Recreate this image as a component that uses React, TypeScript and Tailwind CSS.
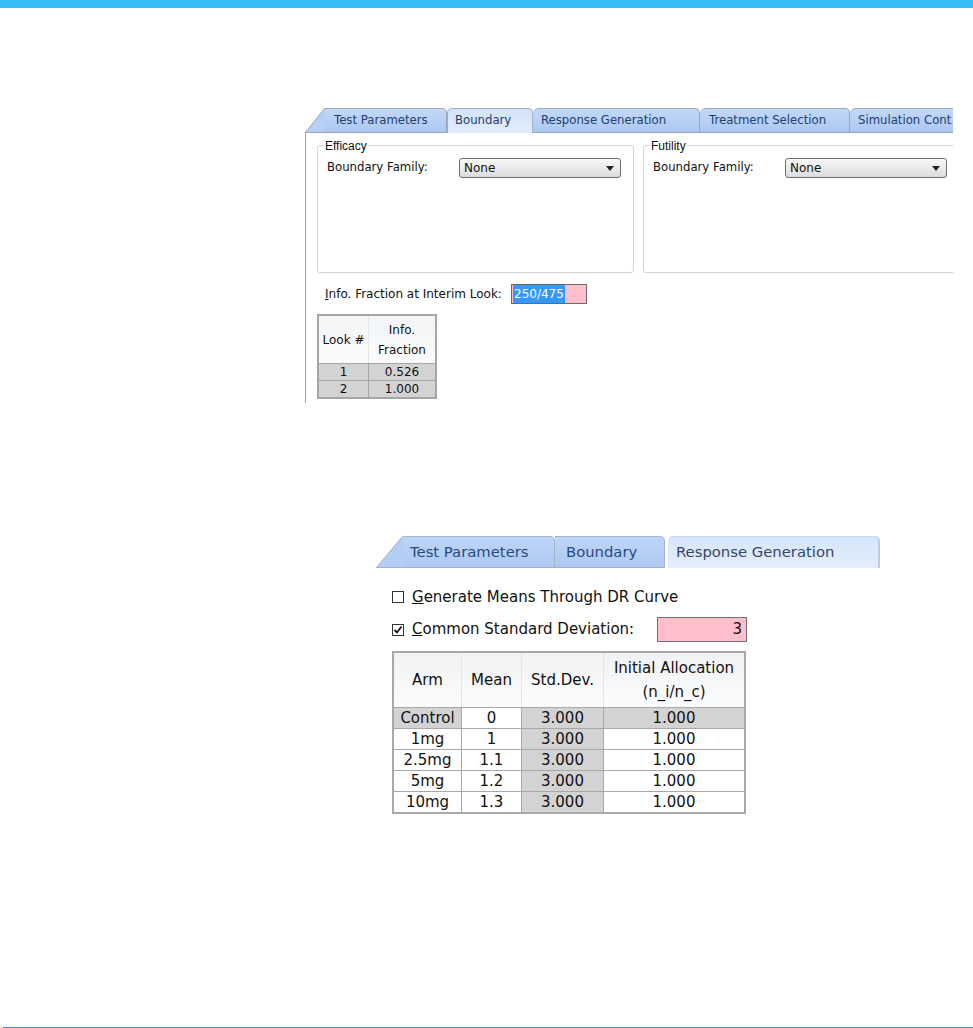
import React from "react";

const Select = () => (
  <div className="flex h-[20px] w-[162px] items-center justify-between rounded-[3px] border border-[#6e6e6e] bg-gradient-to-b from-[#f8f8f8] to-[#dcdcdc] pl-[4px] pr-[6px] text-[12px] text-[#111]">
    <span>None</span>
    <svg width="8" height="5" viewBox="0 0 8 5">
      <polygon points="0,0 8,0 4,5" fill="#222" />
    </svg>
  </div>
);

const CheckBox = ({ checked }: { checked: boolean }) => (
  <div className="flex h-[12px] w-[12px] items-center justify-center border border-[#333] bg-white">
    {checked && (
      <svg width="10" height="10" viewBox="0 0 10 10">
        <polyline points="1.5,5 4,7.5 8.5,1.5" fill="none" stroke="#111" strokeWidth="1.8" />
      </svg>
    )}
  </div>
);

export default function App() {
  const rows = [
    { arm: "Control", mean: "0", sd: "3.000", alloc: "1.000", grey: true },
    { arm: "1mg", mean: "1", sd: "3.000", alloc: "1.000", grey: false },
    { arm: "2.5mg", mean: "1.1", sd: "3.000", alloc: "1.000", grey: false },
    { arm: "5mg", mean: "1.2", sd: "3.000", alloc: "1.000", grey: false },
    { arm: "10mg", mean: "1.3", sd: "3.000", alloc: "1.000", grey: false },
  ];
  return (
    <div className="flex h-[1028px] w-[973px] flex-col overflow-hidden bg-white font-['DejaVu_Sans',sans-serif] text-[#111]">
      <div className="h-[8px] w-full shrink-0 bg-[#35bef3]" />

      {/* Screenshot 1 */}
      <div className="ml-[305px] mt-[100px] flex w-[648px] shrink-0 flex-col overflow-hidden text-[11.7px]">
        <div className="flex h-[25px] w-[700px] items-stretch">
          <div className="flex w-[142px]">
            <svg width="20" height="25" className="shrink-0">
              <polygon points="0,25 19,0.5 20,0.5 20,25" fill="#b6d0f5" />
              <line x1="0.5" y1="24.5" x2="19.5" y2="0.5" stroke="#9aa6b8" />
              <line x1="0" y1="24.5" x2="20" y2="24.5" stroke="#9aa6b8" />
            </svg>
            <div className="flex flex-1 items-center rounded-tr-[5px] border-b border-r border-t border-[#9aa6b8] bg-gradient-to-b from-[#c2d8f7] to-[#acc8f2] pl-[9px] text-[#22406f]">
              Test Parameters
            </div>
          </div>
          <div className="flex w-[86px] items-center rounded-t-[5px] border-l border-r border-t border-[#a4b0c2] bg-gradient-to-b from-[#d2e3f9] to-[#e2edfb] pl-[7px] text-[#22406f]">
            Boundary
          </div>
          <div className="flex w-[167px] items-center rounded-tl-[6px] rounded-tr-[5px] border-b border-r border-t border-[#9aa6b8] bg-gradient-to-b from-[#c2d8f7] to-[#acc8f2] pl-[8px] text-[#22406f]">
            Response Generation
          </div>
          <div className="flex w-[150px] items-center rounded-tl-[6px] rounded-tr-[5px] border-b border-r border-t border-[#9aa6b8] bg-gradient-to-b from-[#c2d8f7] to-[#acc8f2] pl-[9px] text-[#22406f]">
            Treatment Selection
          </div>
          <div className="flex w-[155px] items-center rounded-tl-[6px] rounded-tr-[5px] border-b border-r border-t border-[#9aa6b8] bg-gradient-to-b from-[#c2d8f7] to-[#acc8f2] pl-[8px] text-[#22406f] whitespace-nowrap">
            Simulation Cont
          </div>
        </div>

        <div className="flex h-[270px] flex-col border-l border-[#a0a0a0] pl-[11px] pt-[12px]">
          <div className="flex gap-[9px]">
            {["Efficacy", "Futility"].map((t) => (
              <div key={t} className="relative h-[128px] w-[317px] shrink-0 rounded-[3px] border border-[#cfd5dd]">
                <span className="absolute -top-[9px] left-[6px] bg-white px-[1px] font-['Liberation_Sans',sans-serif] text-[12px] text-[#111]">
                  {t}
                </span>
                <div className="mt-[12px] flex h-[20px] items-center pl-[9px]">
                  <span className="w-[132px]">Boundary Family:</span>
                  <Select />
                </div>
              </div>
            ))}
          </div>

          <div className="ml-[8px] mt-[11px] flex h-[20px] items-center">
            <span className="w-[186px] text-[12px]">
              <span className="underline">I</span>nfo. Fraction at Interim Look:
            </span>
            <div className="flex h-[20px] w-[76px] items-center border border-[#6a6a6a] bg-[#ffc0cb] pl-[1px] text-[12px]">
              <span className="bg-[#3399ff] px-[1px] text-white">250/475</span>
            </div>
          </div>

          <div className="mt-[10px] w-[120px] border-2 border-[#a5a5a5] text-[12px]">
            <div className="flex h-[48px] border-b border-[#a5a5a5] bg-gradient-to-b from-[#f2f4f6] to-[#fbfcfd]">
              <div className="flex w-[50px] items-center justify-center border-r border-[#e3e6ea]">Look #</div>
              <div className="flex flex-1 flex-col items-center justify-center leading-[20px]">
                <span>Info.</span>
                <span>Fraction</span>
              </div>
            </div>
            <div className="flex h-[17px] border-b border-[#a5a5a5] bg-[#d3d3d3] leading-none">
              <div className="flex w-[50px] items-center justify-center border-r border-[#a5a5a5]">1</div>
              <div className="flex flex-1 items-center justify-center">0.526</div>
            </div>
            <div className="flex h-[16px] bg-[#d3d3d3] leading-none">
              <div className="flex w-[50px] items-center justify-center border-r border-[#a5a5a5]">2</div>
              <div className="flex flex-1 items-center justify-center">1.000</div>
            </div>
          </div>
        </div>
      </div>

      {/* Screenshot 2 */}
      <div className="ml-[376px] mt-[133px] flex shrink-0 flex-col">
        <div className="flex h-[32px] items-stretch text-[14.8px]">
          <div className="flex w-[179px]">
            <svg width="27" height="32" className="shrink-0">
              <polygon points="0,32 26,0.5 27,0.5 27,32" fill="#b3cef5" />
              <line x1="0.5" y1="31.5" x2="26.5" y2="0.5" stroke="#a7b2c4" />
              <line x1="0" y1="31.5" x2="27" y2="31.5" stroke="#a7b2c4" />
            </svg>
            <div className="flex flex-1 items-center rounded-tr-[5px] border-b border-r border-t border-[#a7b2c4] bg-gradient-to-b from-[#bdd5f7] to-[#adc9f3] pl-[7px] text-[#2a4a7c]">
              Test Parameters
            </div>
          </div>
          <div className="flex w-[110px] items-center rounded-tr-[5px] border-b border-r border-t border-[#a7b2c4] bg-gradient-to-b from-[#bdd5f7] to-[#adc9f3] pl-[11px] text-[#2a4a7c]">
            Boundary
          </div>
          <div className="ml-[3px] flex w-[212px] items-center rounded-t-[5px] border-r-2 border-t border-r-[#b8cce6] border-t-[#c8d8ee] bg-gradient-to-b from-[#d6e6fb] to-[#e4eefc] pl-[8px] text-[#34466c]">
            Response Generation
          </div>
        </div>

        <div className="ml-[16px] mt-[19px] flex h-[20px] items-center gap-[8px] text-[15px]">
          <CheckBox checked={false} />
          <span>
            <span className="underline">G</span>enerate Means Through DR Curve
          </span>
        </div>
        <div className="ml-[16px] mt-[10px] flex h-[25px] items-center text-[15px]">
          <CheckBox checked={true} />
          <span className="ml-[8px] w-[245px]">
            <span className="underline">C</span>ommon Standard Deviation:
          </span>
          <div className="flex h-[25px] w-[90px] items-center justify-end border border-[#707070] bg-[#ffc0cb] pr-[4px]">
            3
          </div>
        </div>

        <div className="ml-[16px] mt-[9px] w-[354px] border-2 border-[#a8a8a8] text-[15px]">
          <div className="flex h-[55px] border-b border-[#a8a8a8] bg-gradient-to-b from-[#f0f2f4] to-[#fbfcfd]">
            <div className="flex w-[68px] items-center justify-center border-r border-[#e2e5e9]">Arm</div>
            <div className="flex w-[60px] items-center justify-center border-r border-[#e2e5e9]">Mean</div>
            <div className="flex w-[82px] items-center justify-center border-r border-[#e2e5e9]">Std.Dev.</div>
            <div className="flex flex-1 flex-col items-center justify-center leading-[24px]">
              <span>Initial Allocation</span>
              <span>(n_i/n_c)</span>
            </div>
          </div>
          {rows.map((r, i) => (
            <div
              key={r.arm}
              className={
                i === rows.length - 1
                  ? "flex h-[20px] leading-none"
                  : "flex h-[21px] border-b border-[#a8a8a8] leading-none"
              }
            >
              <div className={r.grey ? "flex w-[68px] items-center justify-center border-r border-[#a8a8a8] bg-[#d3d3d3]" : "flex w-[68px] items-center justify-center border-r border-[#a8a8a8] bg-white"}>
                {r.arm}
              </div>
              <div className="flex w-[60px] items-center justify-center border-r border-[#a8a8a8] bg-white">{r.mean}</div>
              <div className="flex w-[82px] items-center justify-center border-r border-[#a8a8a8] bg-[#d3d3d3]">{r.sd}</div>
              <div className={r.grey ? "flex flex-1 items-center justify-center bg-[#d3d3d3]" : "flex flex-1 items-center justify-center bg-white"}>
                {r.alloc}
              </div>
            </div>
          ))}
        </div>
      </div>

      <div className="flex-1" />
      <div className="ml-[3px] h-[1px] shrink-0 bg-[#1f9ad6]" />
    </div>
  );
}
